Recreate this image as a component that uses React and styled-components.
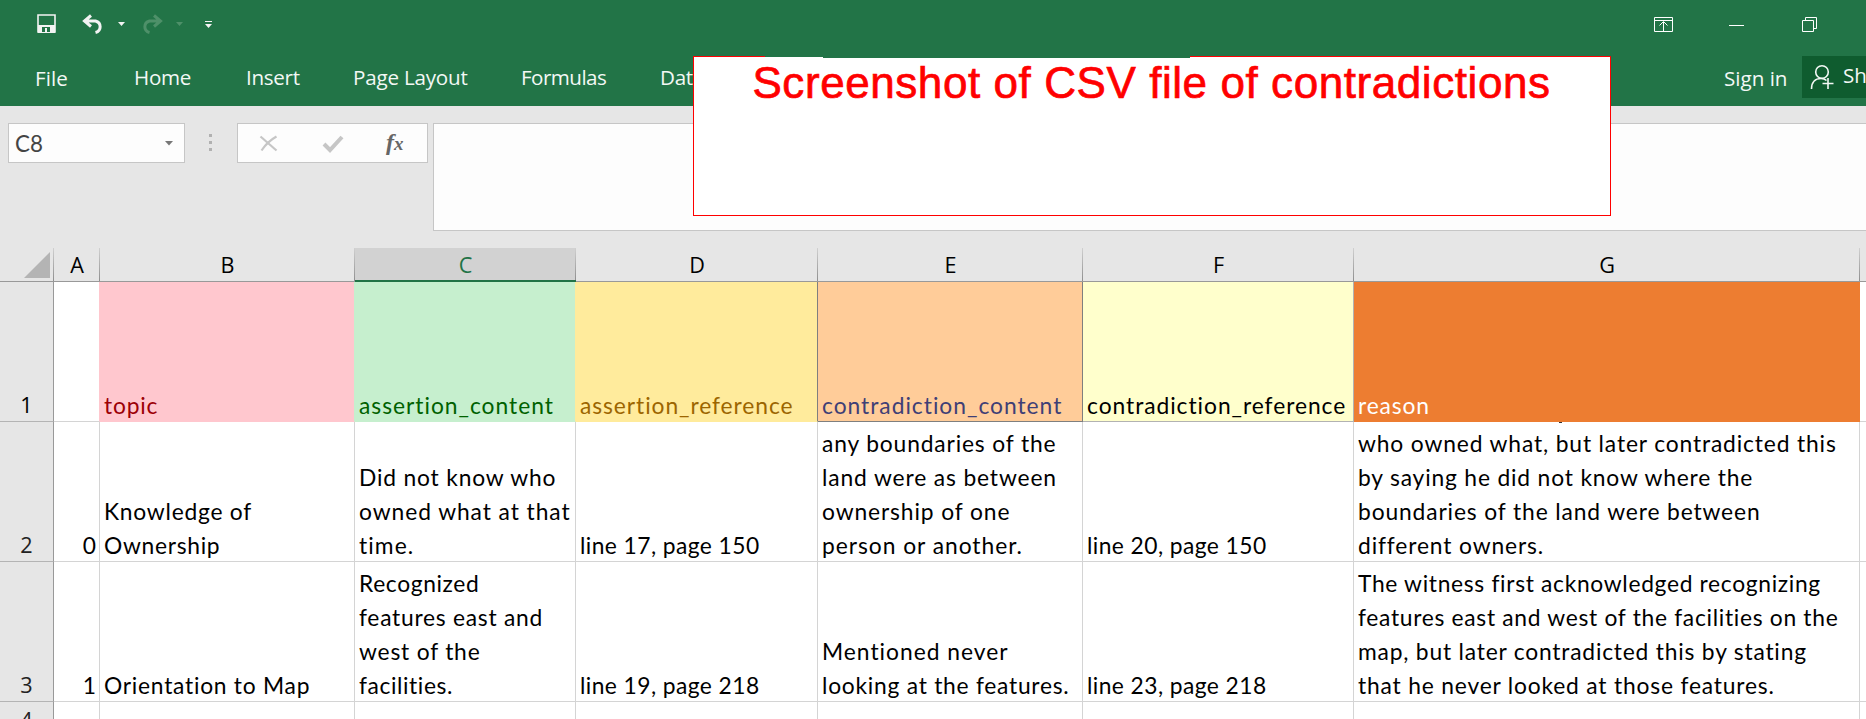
import React from "react";
import styled, { createGlobalStyle } from "styled-components";

const Global = createGlobalStyle`
  * { box-sizing: border-box; }
  html, body { margin: 0; padding: 0; }
  body { width: 1866px; height: 719px; overflow: hidden; background: #e6e6e6; }
`;

const ui = `"Open Sans", "Noto Sans", sans-serif`;
const sheet = `Lato, "Liberation Sans", sans-serif`;

const Window = styled.div`
  position: relative;
  display: flex;
  flex-direction: column;
  width: 1866px;
  height: 719px;
  overflow: hidden;
  font-family: ${ui};
`;

const Header = styled.header`
  height: 106px;
  background: #227447;
  color: #f3f8f5;
  display: flex;
  flex-direction: column;
  flex: none;
`;

const TitleBar = styled.div`
  height: 56px;
  display: flex;
  align-items: flex-start;
  justify-content: space-between;
`;

const Ribbon = styled.div`
  height: 50px;
  display: flex;
  justify-content: space-between;
`;

const Tabs = styled.nav`
  display: flex;
  padding-left: 35px;
`;

const Tab = styled.span`
  width: ${(p) => p.$w}px;
  flex: none;
  padding-top: ${(p) => p.$top || 7}px;
  font-size: 20.6px;
  line-height: 28px;
  letter-spacing: ${(p) => p.$ls || 0}px;
  white-space: nowrap;
`;

const Account = styled.div`
  display: flex;
  width: 142px;
`;

const Share = styled.div`
  width: 64px;
  height: 42px;
  background: #0f5c2f;
  display: flex;
  flex: none;
  overflow: hidden;
`;

const ShareIcon = styled.svg`
  width: 41px;
  height: 42px;
  flex: none;
`;

const FormulaBar = styled.div`
  height: 142px;
  padding: 17px 0 0 8px;
  display: flex;
  align-items: flex-start;
  flex: none;
`;

const Field = styled.div`
  height: ${(p) => p.$h || 40}px;
  width: ${(p) => p.$w}px;
  margin-right: ${(p) => p.$gap || 0}px;
  border: 1px solid #c6c6c6;
  background: #fdfdfd;
  display: flex;
  flex: none;
`;

const NameText = styled.span`
  padding: 6px 0 0 6px;
  width: 156px;
  font-family: ${sheet};
  font-size: 22.4px;
  line-height: 28px;
  color: #444;
`;

const Dots = styled.div`
  width: 3px;
  height: 17px;
  margin: 11px 25px 0 24px;
  display: flex;
  flex-direction: column;
  justify-content: space-between;
  flex: none;
`;

const Dot = styled.i`
  width: 3px;
  height: 3px;
  background: #b1b1b1;
`;

const Grid = styled.div`
  display: grid;
  grid-template-columns: 54px 46px 255px 221px 242px 265px 271px 506px 6px;
  grid-template-rows: 34px 140px 140px 140px 35px;
  flex: none;
`;

const ColHead = styled.div`
  background-color: ${(p) => (p.$active ? "#d2d2d2" : "#e6e6e6")};
  color: ${(p) => (p.$active ? "#217346" : "#000")};
  border-bottom: ${(p) => (p.$active ? "2px solid #217346" : "1px solid #999")};
  background-image: linear-gradient(#d0d0d0, #8f8f8f);
  background-size: ${(p) => (p.$last ? 0 : 1)}px 100%;
  background-position: right top;
  background-repeat: no-repeat;
  text-align: center;
  font-size: 21.6px;
  line-height: 34px;
`;

const Corner = styled(ColHead)`
  display: flex;
  justify-content: flex-end;
  padding: 4px 4px 0 0;
`;

const RowHead = styled.div`
  background: #e6e6e6;
  border-right: 1px solid #999;
  border-bottom: 1px solid #b4b4b4;
  display: flex;
  align-items: flex-end;
  justify-content: center;
  font-size: 21.6px;
  line-height: 33px;
  color: ${(p) => (p.$dim ? "#222" : "#000")};
  overflow: hidden;
`;

const Cell = styled.div`
  background: ${(p) => p.$bg || "#fff"};
  color: ${(p) => p.$fg || "#000"};
  border-right: 1px solid ${(p) => p.$right || p.$bg || "#d4d4d4"};
  border-bottom: 1px solid ${(p) => p.$bottom || p.$bg || "#d4d4d4"};
  padding: 0 ${(p) => (p.$num ? 3 : 4)}px 0 4px;
  display: flex;
  flex-direction: column;
  justify-content: flex-end;
  text-align: ${(p) => (p.$num ? "right" : "left")};
  font-family: ${sheet};
  font-size: 22.8px;
  font-variant-ligatures: none;
  line-height: 34px;
  white-space: nowrap;
  overflow: hidden;
`;

const Line = styled.span`
  display: block;
  margin-bottom: -1px;
  padding-top: 1px;
  letter-spacing: ${(p) => p.$ls || 0}px;
`;

/* Tip of the wrapped line that is scrolled out above the cell. */
const Descender = styled.i`
  width: 3px;
  height: 1px;
  margin: 0 0 auto 201px;
  background: #333;
`;

const Callout = styled.div`
  position: absolute;
  left: 693px;
  top: 56px;
  width: 918px;
  height: 160px;
  padding-right: 1px;
  background: #fff;
  border: 1px solid #f00;
  color: #f00;
  text-align: center;
  font-family: "Liberation Sans", Arial, sans-serif;
  font-size: 44px;
  line-height: 52px;
  letter-spacing: 0.57px;
  -webkit-text-stroke: 0.7px #f00;
  white-space: nowrap;

  &::before,
  &::after {
    content: "";
    position: absolute;
    height: 1px;
    background: #227447;
  }
  &::before {
    left: 71px;
    top: -1px;
    width: 425px;
  }
  &::after {
    left: 129px;
    top: 0;
    width: 367px;
  }
`;

const QuickIcons = () => (
  <svg width="230" height="50" fill="none">
    <path d="M38 15h17v17H38z" stroke="#f3f3f3" strokeWidth="1.600" />
    <path d="M38 25h17v8H38z" fill="#f3f3f3" />
    <path d="M42 27h8v5h-3v-4h-2v4h-3z" fill="#227447" />
    <path d="M91 15.500l-6.500 5.500 6.500 5.500M85 21h10.500a6.500 6 0 0 1 0 11.500" stroke="#f3f3f3" strokeWidth="3" />
    <path d="M118 22h7l-3.500 4z" fill="#f3f3f3" />
    <path d="M154 15.500l6.500 5.500-6.500 5.500M160 21h-10.500a6.500 6 0 0 0 0 11.500" stroke="#4e9069" strokeWidth="3" />
    <path d="M176 22h7l-3.500 4z" fill="#4e9069" />
    <path d="M205 21h7v1h-7zM205 24h7l-3.500 4z" fill="#f3f3f3" />
  </svg>
);

const WindowIcons = () => (
  <svg width="226" height="50" fill="none" stroke="#fff">
    <path d="M14.500 17.500h18v14h-18zM14.500 20.500h18M23.500 31v-9M19.500 25.500l4-4 4 4" />
    <path d="M89 25.500h15" />
    <path d="M162.500 20.500h11v11h-11zM165.500 20v-2.500h11v11h-3" />
  </svg>
);

const header = [
  { t: "", right: "#ffc7ce" },
  { t: "topic", ls: 0.82, bg: "#ffc7ce", fg: "#9c0006", right: "#c6efce" },
  { t: "assertion_content", ls: 0.98, bg: "#c6efce", fg: "#006100", right: "#ffeb9c" },
  { t: "assertion_reference", ls: 0.93, bg: "#ffeb9c", fg: "#9c6500", right: "#7f7f7f" },
  { t: "contradiction_content", ls: 0.98, bg: "#ffcc99", fg: "#3f3f76", right: "#7f7f7f", bottom: "#7f7f7f" },
  { t: "contradiction_reference", ls: 0.95, bg: "#ffffcc", right: "#b2b2b2", bottom: "#b2b2b2" },
  { t: "reason", ls: 0.83, bg: "#ed7d31", fg: "#fff" },
];

const rows = [
  [
    [["0", 0]],
    [["Knowledge of", 0.76], ["Ownership", 0.7]],
    [["Did not know who", 0.83], ["owned what at that", 0.93], ["time.", 1.1]],
    [["line 17, page 150", 0.43]],
    [["any boundaries of the", 0.85], ["land were as between", 0.87], ["ownership of one", 0.89], ["person or another.", 0.97]],
    [["line 20, page 150", 0.43]],
    [
      ["who owned what, but later contradicted this", 0.86],
      ["by saying he did not know where the", 0.83],
      ["boundaries of the land were between", 0.87],
      ["different owners.", 0.87],
    ],
  ],
  [
    [["1", 0]],
    [["Orientation to Map", 0.75]],
    [["Recognized", 0.63], ["features east and", 0.74], ["west of the", 0.8], ["facilities.", 0.6]],
    [["line 19, page 218", 0.43]],
    [["Mentioned never", 0.99], ["looking at the features.", 0.75]],
    [["line 23, page 218", 0.43]],
    [
      ["The witness first acknowledged recognizing", 0.68],
      ["features east and west of the facilities on the", 0.7],
      ["map, but later contradicted this by stating", 0.8],
      ["that he never looked at those features.", 0.82],
    ],
  ],
];

export default function App() {
  return (
    <Window>
      <Global />
      <Header>
        <TitleBar>
          <QuickIcons />
          <WindowIcons />
        </TitleBar>
        <Ribbon>
          <Tabs>
            <Tab $w={99} $top={8} $ls={0.1}>File</Tab>
            <Tab $w={112} $ls={-0.3}>Home</Tab>
            <Tab $w={107} $ls={-0.3}>Insert</Tab>
            <Tab $w={168} $ls={-0.2}>Page Layout</Tab>
            <Tab $w={139} $ls={-0.55}>Formulas</Tab>
            <Tab $w={60} $ls={-0.3}>Data</Tab>
          </Tabs>
          <Account>
            <Tab $w={78} $top={8}>Sign in</Tab>
            <Share>
              <ShareIcon fill="none" stroke="#f3f8f5" strokeWidth="1.600">
                <circle cx="20" cy="16" r="6.300" />
                <path d="M9.500 33c0-7 4-10.500 9.500-10.500 2 0 4 .5 5.500 2M26 22v11M20.500 27.500h11" />
              </ShareIcon>
              <Tab $w={60} $top={5}>Share</Tab>
            </Share>
          </Account>
        </Ribbon>
      </Header>
      <FormulaBar>
        <Field $w={177}>
          <NameText>C8</NameText>
          <svg width="12" height="38"><path d="M0 17h8l-4 4.500z" fill="#777" /></svg>
        </Field>
        <Dots><Dot /><Dot /><Dot /></Dots>
        <Field $w={191} $gap={5}>
          <svg width="189" height="38" fill="none">
            <path d="M22.500 12.500l16 14" stroke="#c6c6c6" strokeWidth="2.200" />
            <path d="M38.500 12.500q-9 5-15 14" stroke="#c6c6c6" strokeWidth="2.200" />
            <path d="M86 20l6 6 12-13" stroke="#c6c6c6" strokeWidth="4" />
            <text x="148" y="26" fill="#666" fontFamily="Liberation Serif, serif" fontStyle="italic" fontWeight="700" fontSize="24">f<tspan fontSize="19">x</tspan></text>
          </svg>
        </Field>
        <Field $w={1440} $h={108} />
      </FormulaBar>
      <Grid>
        <Corner><svg width="26" height="26"><path d="M26 0v26H0z" fill="#b4b4b4" /></svg></Corner>
        {["A", "B", "C", "D", "E", "F", "G"].map((c) => (
          <ColHead key={c} $active={c === "C"}>{c}</ColHead>
        ))}
        <ColHead $last />
        <RowHead>1</RowHead>
        {header.map((h, i) => (
          <Cell key={i} $bg={h.bg} $fg={h.fg} $right={h.right} $bottom={h.bottom}>
            <Line $ls={h.ls}>{h.t}</Line>
          </Cell>
        ))}
        <Cell />
        {rows.map((r, n) => (
          <React.Fragment key={n}>
            <RowHead $dim>{n + 2}</RowHead>
            {r.map((lines, i) => (
              <Cell key={i} $num={i === 0}>
                {n === 0 && i === 6 && <Descender />}
                {lines.map(([text, ls]) => <Line key={text} $ls={ls}>{text}</Line>)}
              </Cell>
            ))}
            <Cell />
          </React.Fragment>
        ))}
        <RowHead $dim>4</RowHead>
        {Array.from({ length: 8 }, (_, i) => <Cell key={i} />)}
      </Grid>
      <Callout>Screenshot of CSV file of contradictions</Callout>
    </Window>
  );
}
